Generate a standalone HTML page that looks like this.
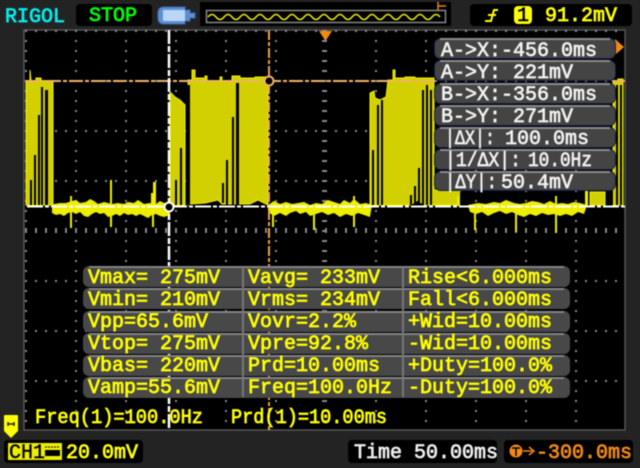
<!DOCTYPE html>
<html><head><meta charset="utf-8"><style>
html,body{margin:0;padding:0;background:#232323;width:640px;height:468px;overflow:hidden}
svg{display:block;filter:blur(.45px)}
text{font-family:"Liberation Mono",monospace;font-size:20px;white-space:pre}
.m{fill:#ff0;stroke:#ff0;stroke-width:.75;paint-order:stroke}
.w{fill:#f4f4f4;stroke:#eee;stroke-width:.7}
.t{stroke-width:.75}
</style></head><body>
<svg width="640" height="468" viewBox="0 0 640 468" xmlns="http://www.w3.org/2000/svg">
<defs>
<pattern id="gv" width="10" height="50" patternUnits="userSpaceOnUse" x="25" y="30"><rect x="0" y="0" width="2" height="2" fill="#8a8a8a"/></pattern>
<pattern id="dv" width="50" height="10" patternUnits="userSpaceOnUse" x="25" y="30"><rect x="0" y="0" width="2" height="2" fill="#8a8a8a"/></pattern>
<pattern id="tk" width="10" height="10" patternUnits="userSpaceOnUse" x="25" y="228"><rect x="0" y="0" width="2" height="5" fill="#8a8a8a"/></pattern>
<pattern id="th" width="10" height="10" patternUnits="userSpaceOnUse" x="322" y="30"><rect x="0" y="0" width="5" height="2" fill="#8a8a8a"/></pattern>
</defs>
<rect width="640" height="468" fill="#232323"/>
<rect x="24" y="30" width="601" height="400" fill="#000" stroke="#555" stroke-width="1.5"/>
<rect x="25" y="30" width="600" height="400" fill="url(#gv)"/>
<rect x="25" y="30" width="600" height="400" fill="url(#dv)"/>
<rect x="25" y="228" width="600" height="5" fill="url(#tk)"/>
<rect x="322" y="30" width="5" height="400" fill="url(#th)"/>

<!-- waveform fills -->
<g fill="#d2d000" stroke="#efef00" stroke-width="1">
<path d="M26 205V81H30V70L31 81H36V78H41V81H53V205Z"/>
<path d="M170 205V92L175 97 180 100 185 105V205Z"/>
<path d="M188 205V80H192V70H195V78H205V76H207V81H220V77H222V81H232V76H240V78H255V77H268V205L258 200 250 204H222L218 200 205 203 190 204Z"/>
<path d="M370 205V93L374 91 375 98 380 100 386 97 388 80H393V70H395V78H405V77H415V78H434V190H460V205H424L418 200 410 205Z"/>
<path d="M590 205V192H605V205Z"/>
<path d="M613 205V81H618V79H623V205Z"/>
</g>
<g fill="#000">
<rect x="30" y="180" width="2" height="25"/><rect x="34" y="155" width="2" height="50"/><rect x="38" y="115" width="2" height="90"/><rect x="41" y="87" width="2" height="118"/><rect x="45" y="90" width="3" height="115"/>
<rect x="175" y="180" width="2" height="25"/><rect x="180" y="148" width="2" height="57"/><rect x="186" y="85" width="4" height="120"/>
<rect x="222" y="183" width="2" height="20"/><rect x="226" y="160" width="2" height="45"/><rect x="232" y="117" width="2" height="88"/><rect x="236" y="83" width="3" height="122"/>
<rect x="372" y="150" width="2" height="55"/><rect x="377" y="105" width="2" height="100"/><rect x="381" y="100" width="2" height="105"/>
<rect x="410" y="195" width="2" height="10"/><rect x="414" y="186" width="2" height="19"/><rect x="418" y="168" width="2" height="37"/>
<rect x="422" y="90" width="2" height="115"/><rect x="426" y="85" width="2" height="120"/><rect x="430" y="90" width="2" height="115"/>
<rect x="460" y="192" width="2" height="13"/><rect x="465" y="192" width="2" height="13"/>
<rect x="607" y="190" width="2" height="15"/><rect x="611" y="190" width="2" height="15"/><rect x="616" y="85" width="2" height="120"/><rect x="620" y="85" width="2" height="120"/>
</g>
<!-- noise -->
<g fill="#eeee00">
<path d="M52 205V213L56 215 60 214 64 216 68 213 72 212 76 214 80 212 84 216 88 217 92 214 96 212 100 214 104 213 108 217 112 216 116 214 120 216 124 213 128 215 132 214 136 216 140 214 144 216 148 218 152 215 156 214 160 216 164 217 170 215V203H164L160 201 156 204 150 203 144 204 138 200 134 203 128 202 124 204 118 203 112 204 104 202 98 204 94 201 90 199 86 202 80 203 76 200 72 201 66 203 60 203 54 204Z"/>
<rect x="70" y="196" width="2" height="32"/><rect x="110" y="180" width="2" height="47"/><rect x="151" y="193" width="2" height="12"/><rect x="153" y="182" width="3" height="32"/><rect x="152" y="205" width="2" height="22"/>
<path d="M268 205V212L274 216 280 213 286 216 290 213 296 211 300 214 306 212 310 216 316 214 322 212 328 215 334 213 340 217 346 214 352 216 358 213 364 215 370 217 372 205 366 203 360 204 354 199 350 203 344 200 340 204 334 202 328 200 322 204 316 203 310 205 304 202 298 203 292 204 286 202 280 204 274 201Z"/>
<rect x="272" y="205" width="2" height="22"/><rect x="313" y="205" width="2" height="25"/><rect x="353" y="196" width="2" height="31"/>
<path d="M468 205L470 212 476 214 482 212 488 216 494 213 500 211 506 214 512 212 518 215 524 217 530 214 536 216 542 213 548 215 554 214 560 216 566 214 572 216 578 212 584 214 587 205 580 203 574 202 568 204 562 203 556 204 550 201 544 204 538 202 532 201 526 203 520 204 514 203 506 200 500 203 494 202 486 204 478 203Z"/>
<rect x="474" y="205" width="2" height="25"/><rect x="515" y="205" width="2" height="27"/><rect x="555" y="196" width="2" height="37"/><rect x="457" y="196" width="2" height="10"/>
<rect x="585" y="190" width="3" height="16"/>
</g>

<!-- cursors -->
<line x1="25" y1="81" x2="436" y2="81" stroke="#f2b36a" stroke-width="2" stroke-dasharray="14 2 4 2"/>
<line x1="612" y1="81" x2="625" y2="81" stroke="#f2b36a" stroke-width="2"/>
<line x1="269" y1="30" x2="269" y2="430" stroke="#e8a050" stroke-width="2" stroke-dasharray="10 2 4 2"/>
<line x1="27" y1="206.500" x2="625" y2="206.500" stroke="#fff" stroke-width="2" stroke-dasharray="16 2 4 2"/>
<line x1="169" y1="30" x2="169" y2="430" stroke="#fff" stroke-width="2.500" stroke-dasharray="14 2 6 2"/>
<circle cx="269" cy="81" r="4.500" fill="#000" stroke="#f2b36a" stroke-width="2"/>
<circle cx="169" cy="207" r="4.500" fill="#000" stroke="#fff" stroke-width="2"/>

<path d="M319 31H332L325.500 41Z" fill="#f28a10"/>
<path d="M615 39L624 47 615 55Z" fill="#f28a10"/>

<!-- right panels -->
<g fill="#444" stroke="#16204a" stroke-width="1">
<rect x="434.500" y="38.500" width="181" height="20" rx="6"/>
<rect x="434.500" y="60.500" width="181" height="20" rx="6"/>
<rect x="434.500" y="83.500" width="181" height="20" rx="6"/>
<rect x="434.500" y="105.500" width="181" height="20" rx="6"/>
<rect x="434.500" y="127.500" width="181" height="20" rx="6"/>
<rect x="434.500" y="149.500" width="181" height="20" rx="6"/>
<rect x="434.500" y="171.500" width="181" height="19" rx="6"/>
</g>
<g fill="none" stroke="#8c8c8c" stroke-width="2">
<path d="M440 39H610M440 61H610M440 84H610M440 106H610M440 128H610M440 150H610M440 172H610"/>
</g>
<text class="w" x="441" y="56">A-&gt;X:-456.0ms</text>
<text class="w" x="441" y="78">A-&gt;Y: 221mV</text>
<text class="w" x="441" y="100">B-&gt;X:-356.0ms</text>
<text class="w" x="441" y="122">B-&gt;Y: 271mV</text>
<text class="w" x="445" y="144" textLength="50" lengthAdjust="spacingAndGlyphs">|ΔX|:</text>
<text class="w" x="505" y="144">100.0ms</text>
<text class="w" x="445" y="166" textLength="76" lengthAdjust="spacingAndGlyphs">|1/ΔX|:</text>
<text class="w" x="528" y="166" textLength="64" lengthAdjust="spacingAndGlyphs">10.0Hz</text>
<text class="w" x="445" y="188" textLength="52" lengthAdjust="spacingAndGlyphs">|ΔY|:</text>
<text class="w" x="501" y="188">50.4mV</text>

<!-- measure panels -->
<g fill="#484848">
<rect x="83" y="266" width="487" height="21" rx="6"/>
<rect x="83" y="288" width="487" height="21" rx="6"/>
<rect x="83" y="311" width="487" height="21" rx="6"/>
<rect x="83" y="333" width="487" height="21" rx="6"/>
<rect x="83" y="355" width="487" height="21" rx="6"/>
<rect x="83" y="377" width="487" height="21" rx="6"/>
</g>
<path d="M89 267H564M89 289H564M89 312H564M89 334H564M89 356H564M89 378H564" stroke="#858585" stroke-width="2" fill="none"/>
<g fill="#777"><rect x="242" y="267" width="2" height="130"/><rect x="402" y="267" width="2" height="130"/></g>
<text class="m" x="88" y="283">Vmax= 275mV</text><text class="m" x="248" y="283">Vavg= 233mV</text><text class="m" x="408" y="283">Rise&lt;6.000ms</text>
<text class="m" x="88" y="305">Vmin= 210mV</text><text class="m" x="248" y="305">Vrms= 234mV</text><text class="m" x="408" y="305">Fall&lt;6.000ms</text>
<text class="m" x="88" y="327">Vpp=65.6mV</text><text class="m" x="248" y="327">Vovr=2.2%</text><text class="m" x="408" y="327">+Wid=10.00ms</text>
<text class="m" x="88" y="349">Vtop= 275mV</text><text class="m" x="248" y="349">Vpre=92.8%</text><text class="m" x="408" y="349">-Wid=10.00ms</text>
<text class="m" x="88" y="371">Vbas= 220mV</text><text class="m" x="248" y="371">Prd=10.00ms</text><text class="m" x="408" y="371">+Duty=100.0%</text>
<text class="m" x="88" y="393">Vamp=55.6mV</text><text class="m" x="248" y="393">Freq=100.0Hz</text><text class="m" x="408" y="393">-Duty=100.0%</text>
<text class="m" x="35" y="423" textLength="168" lengthAdjust="spacingAndGlyphs">Freq(1)=100.0Hz</text>
<text class="m" x="231" y="423" textLength="156" lengthAdjust="spacingAndGlyphs">Prd(1)=10.00ms</text>

<!-- top bar -->
<text class="t" x="5" y="22" fill="#0ee" stroke="#0ee">RIGOL</text>
<rect x="76" y="4" width="76" height="22" rx="4" fill="#000"/>
<text class="t" x="89" y="21" fill="#0f0" stroke="#0f0">STOP</text>
<path d="M158 13Q158 7 164 7H185V10H190V13H195V18H190V21H185V24H164Q158 24 158 18Z" fill="#5b8fd0" stroke="#3a6ab0"/>
<rect x="163" y="10" width="22" height="11" fill="#bcd6f5"/>
<rect x="200" y="2" width="251" height="24" fill="#000"/>
<rect x="206.500" y="10.500" width="239" height="12" fill="#000" stroke="#888" stroke-width="1.500"/>
<path d="M208 17q4-5 8 0t8 0t8 0t8 0t8 0t8 0t8 0t8 0t8 0t8 0t8 0t8 0t8 0t8 0t8 0t8 0t8 0t8 0t8 0t8 0t8 0t8 0t8 0t8 0t8 0t8 0t8 0t8 0t8 0" fill="none" stroke="#ee0" stroke-width="1.500"/>
<path d="M438 2V10M438 6H446" stroke="#f28a10" stroke-width="1.500" fill="none"/>
<rect x="470" y="4" width="162" height="22" rx="4" fill="#000"/>
<path d="M485 21H491L494 10H498" fill="none" stroke="#ff0" stroke-width="2"/><path d="M488 15H496" stroke="#ff0" stroke-width="2"/>
<rect x="514" y="6" width="18" height="18" rx="4" fill="#ff0"/>
<text x="517" y="21" fill="#000" stroke="#000" stroke-width=".5">1</text>
<text class="t" x="545" y="21" fill="#ff0" stroke="#ff0">91.2mV</text>

<!-- bottom bar -->
<path d="M4 416Q4 415 5 415H17Q18 415 18 416V431L11 438 4 431Z" fill="#ff0"/>
<path d="M8 424H14M8 422V426M14 422V426" stroke="#222" stroke-width="1.500" fill="none"/>
<rect x="4" y="440" width="139" height="23" rx="4" fill="#000"/>
<rect x="8" y="443" width="54" height="17" fill="#ee0"/>
<text x="9" y="458" fill="#000" stroke="#000" stroke-width=".4" textLength="36" lengthAdjust="spacingAndGlyphs">CH1</text>
<path d="M45 450H60V456H45Z" fill="#000"/><path d="M45 447H60" stroke="#000" stroke-dasharray="2 1"/>
<text class="t" x="66" y="458" fill="#ff0" stroke="#ff0">20.0mV</text>
<rect x="348" y="440" width="149" height="23" rx="4" fill="#000"/>
<text class="t" x="354" y="458" fill="#eee" stroke="#eee">Time 50.00ms</text>
<rect x="504" y="440" width="129" height="23" rx="4" fill="#000"/>
<circle cx="516" cy="451" r="6.500" fill="#f28a10"/>
<path d="M512 448H520M516 448V456" stroke="#000" stroke-width="1.500"/>
<path d="M523 451H532M529 447L534 451 529 455" stroke="#f28a10" stroke-width="1.500" fill="none"/>
<text class="t" x="536" y="458" fill="#f28a10" stroke="#f28a10">-300.0ms</text>
</svg>
</body></html>
